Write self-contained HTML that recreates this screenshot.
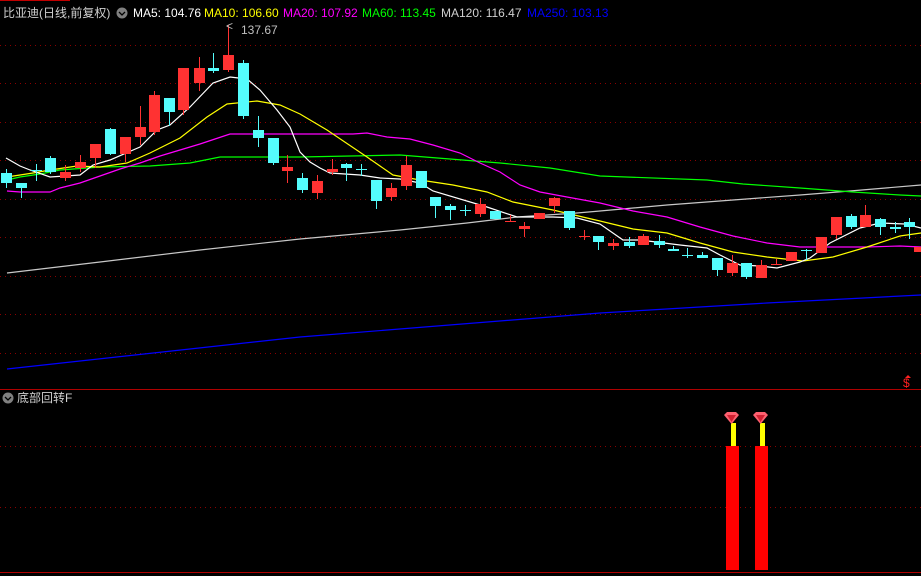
<!DOCTYPE html>
<html><head><meta charset="utf-8"><style>
html,body{margin:0;padding:0;background:#000;width:921px;height:576px;overflow:hidden}
svg{display:block}
text{font-family:"Liberation Sans","Noto Sans CJK SC",sans-serif;font-size:12px}
</style></head><body>
<svg width="921" height="576" viewBox="0 0 921 576" xmlns="http://www.w3.org/2000/svg">
<rect width="921" height="576" fill="#000"/>
<line x1="0" y1="0.5" x2="70" y2="0.5" stroke="#c00000"/>
<g stroke="#8a0000" stroke-dasharray="1,4" stroke-width="1">
<line x1="0" y1="45.5" x2="921" y2="45.5"/><line x1="0" y1="83.5" x2="921" y2="83.5"/>
<line x1="0" y1="122.5" x2="921" y2="122.5"/><line x1="0" y1="160.5" x2="921" y2="160.5"/>
<line x1="0" y1="199.5" x2="921" y2="199.5"/><line x1="0" y1="237.5" x2="921" y2="237.5"/>
<line x1="0" y1="276.5" x2="921" y2="276.5"/><line x1="0" y1="314.5" x2="921" y2="314.5"/>
<line x1="0" y1="353.5" x2="921" y2="353.5"/>
<line x1="0" y1="446.5" x2="921" y2="446.5"/><line x1="0" y1="507.5" x2="921" y2="507.5"/>
</g>
<line x1="0" y1="389.5" x2="921" y2="389.5" stroke="#b00000"/>
<line x1="0" y1="572.5" x2="921" y2="572.5" stroke="#b00000"/>
<g fill="none" stroke-width="1.2">
<polyline stroke="#0000ff" points="7,369 300,337 600,313 767,303 921,295"/>
<polyline stroke="#c8c8c8" points="7,273 100,262 200,250 300,239 400,230 467,223 517,217 577,213 600,211 667,205 733,200 800,195 850,191 921,185"/>
<polyline stroke="#00ff00" points="7,180 20,177 40,174 60,170 100,167 150,166 190,163 220,157 300,157 400,155 450,159 500,163 550,168 600,176 707,180 743,184 800,188 853,192 900,195 921,196"/>
<polyline stroke="#ff00ff" points="7,191 20,192 50,192 60,188 80,183 100,176 120,169 140,163 160,156 180,150 200,144 215,139 230,134 300,134 353,134 367,133 387,137 410,139 433,145 460,153 480,163 500,172 520,185 540,192 567,197 600,203 633,211 667,217 700,227 733,236 767,243 800,247 867,247 900,246 921,247"/>
<polyline stroke="#ffff00" points="7,177 33,173 50,170 77,166 100,167 127,163 150,153 180,138 207,117 227,104 257,101 280,105 300,114 327,130 367,157 393,175 420,180 453,185 487,192 513,202 553,210 587,218 600,221 633,229 667,233 700,243 733,252 767,257 803,261 833,257 867,247 900,236 921,233"/>
<polyline stroke="#ffffff" points="6,158 20,166 30,170 50,177 80,175 93,165 110,160 140,147 157,130 170,125 190,107 213,83 230,77 247,79 260,90 277,110 290,127 300,152 310,162 320,168 330,173 360,175 380,178 400,179 420,183 433,191 487,207 517,217 553,217 577,218 600,224 623,240 640,240 680,245 707,248 720,255 740,265 760,266 777,268 800,262 810,258 830,243 860,228 880,223 905,224 921,228"/>
</g>
<g id="c"></g>
<line x1="228.5" y1="25" x2="228.5" y2="55" stroke="#ff3232"/>
<text x="226" y="30" fill="#c0c0c0" font-size="9">&lt;</text>
<text x="241" y="34" fill="#c0c0c0">137.67</text>
<text x="3" y="17" fill="#d0d0d0">比亚迪(日线,前复权)</text>
<circle cx="122" cy="13" r="5.5" fill="#808080"/><path d="M119,12 l3,3 l3,-3" stroke="#000" fill="none" stroke-width="1.3"/>
<text x="133" y="17" fill="#ffffff">MA5: 104.76</text>
<text x="204" y="17" fill="#ffff00">MA10: 106.60</text>
<text x="283" y="17" fill="#ff00ff">MA20: 107.92</text>
<text x="362" y="17" fill="#00ff00">MA60: 113.45</text>
<text x="441" y="17" fill="#d0d0d0">MA120: 116.47</text>
<text x="527" y="17" fill="#0000ff">MA250: 103.13</text>
<circle cx="8" cy="398" r="5.5" fill="#808080"/><path d="M5,397 l3,3 l3,-3" stroke="#000" fill="none" stroke-width="1.3"/>
<text x="17" y="402" fill="#d0d0d0">底部回转F</text>
<text x="903" y="387" fill="#ff2020" font-size="11">$</text>
<path d="M905,378 l3,-3 l3,3z" fill="#ff2020"/>
<rect x="726" y="446" width="13" height="124" fill="#ff0000"/>
<rect x="755" y="446" width="13" height="124" fill="#ff0000"/>
<rect x="731" y="423" width="5" height="23" fill="#ffff00"/>
<rect x="760" y="423" width="5" height="23" fill="#ffff00"/>
<path d="M724,415 l3,-3 h9 l3,3 l-7.5,9z" fill="#ff6070"/><path d="M727,415 h9 l-4.5,7z" fill="#d02030"/>
<path d="M753,415 l3,-3 h9 l3,3 l-7.5,9z" fill="#ff6070"/><path d="M756,415 h9 l-4.5,7z" fill="#d02030"/>
</svg>
<script>
var d=[[6,173,183,169,188,0],[21,183,188,183,198,0],[36,170,171,164,181,0],[50,158,172,156,174,0],[65,172,178,165,181,1],[80,162,168,155,172,1],[95,144,158,144,168,1],[110,129,154,128,155,0],[125,137,154,137,162,1],[140,127,137,106,145,1],[154,95,132,91,135,1],[169,98,112,98,126,0],[183,68,110,68,115,1],[199,68,83,57,91,1],[213,68,71,53,73,0],[228,55,70,55,72,1],[243,63,116,60,119,0],[258,130,138,116,147,0],[273,138,163,138,165,0],[287,167,171,155,183,1],[302,178,190,173,193,0],[317,181,193,175,199,1],[332,169,172,159,175,1],[346,164,168,163,181,0],[361,169,170,164,176,0],[376,180,201,180,209,0],[391,188,197,183,201,1],[406,165,186,156,190,1],[421,171,188,171,188,0],[435,197,206,197,218,0],[450,206,210,204,220,0],[465,210,211,205,216,0],[480,204,214,198,217,1],[495,211,219,211,219,0],[510,221,222,215,222,1],[524,226,229,222,237,1],[539,213,219,213,219,1],[554,198,206,197,213,1],[569,211,228,211,230,0],[584,236,237,230,240,1],[598,236,242,236,250,0],[613,243,246,239,250,1],[629,242,246,237,248,0],[643,236,245,234,245,1],[659,241,245,235,248,0],[673,249,251,246,251,0],[687,255,256,248,258,0],[702,255,258,252,258,0],[717,258,270,258,276,0],[732,263,273,255,276,1],[746,263,277,263,279,0],[761,265,278,260,278,1],[776,264,265,259,265,1],[791,252,261,252,261,1],[806,250,251,249,260,0],[821,237,253,237,253,1],[836,217,235,217,239,1],[851,216,227,214,229,0],[865,215,227,205,227,1],[880,219,227,218,235,0],[895,227,229,222,233,0],[909,222,227,218,239,0],[919,247,252,247,252,1]];
var s='';d.forEach(function(k){var c=k[5]?'#ff3232':'#54fcfc';s+='<line x1="'+(k[0]+.5)+'" y1="'+k[3]+'" x2="'+(k[0]+.5)+'" y2="'+k[4]+'" stroke="'+c+'"/><rect x="'+(k[0]-5)+'" y="'+k[1]+'" width="11" height="'+Math.max(1,k[2]-k[1])+'" fill="'+c+'"/>';});
document.getElementById('c').innerHTML=s;
</script>
</body></html>
